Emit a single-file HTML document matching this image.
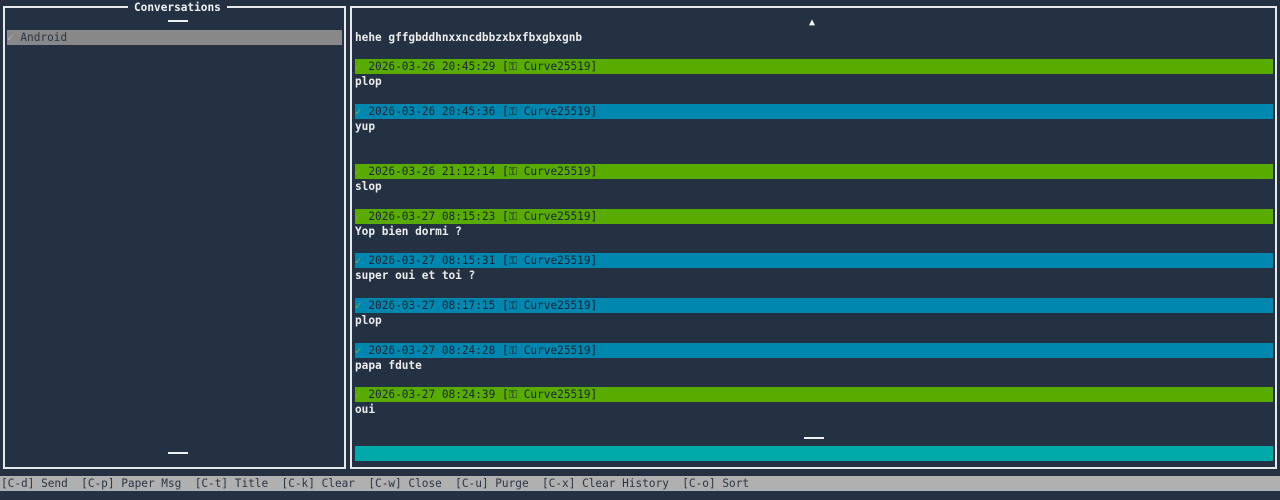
<!DOCTYPE html>
<html><head><meta charset="utf-8"><style>
html,body{margin:0;padding:0;width:1280px;height:500px;overflow:hidden;background:#243142;}
body{position:relative;font-family:"DejaVu Sans Mono","Liberation Mono",monospace;font-size:11.1px;color:#f0f0f0;}
.a{position:absolute;white-space:pre;line-height:15px;height:15px;}
.box{position:absolute;border:2px solid #e8e8e8;box-sizing:border-box;}
.bar{left:355px;width:918px;color:#1a2636;}
.g{background:#5aab00;}
.b{background:#0087af;}
.ck{color:#7fa060;}
.m{left:355px;font-weight:bold;color:#ececec;}
.ln{position:absolute;height:2px;background:#f0f0f0;width:20px;}
</style></head><body>
<div class="box" style="left:3px;top:6px;width:343px;height:463px"></div>
<div class="box" style="left:350px;top:6px;width:927px;height:463px"></div>
<div class="a" style="left:128px;top:0px;background:#243142;padding:0 6px;font-weight:bold">Conversations</div>
<div class="ln" style="left:168px;top:20px"></div>
<div class="a" style="left:7px;top:30px;width:335px;background:#888;color:#2a3545"><span style="color:#aaa">✓</span> Android</div>
<div class="ln" style="left:168px;top:452px"></div>

<div class="a" style="left:809px;top:15px;font-size:10px">▲</div>
<div class="a m" style="top:30px">hehe gffgbddhnxxncdbbzxbxfbxgbxgnb</div>

<div class="a bar g" style="top:59px"><span class="ck">✓</span> 2026-03-26 20:45:29 [⚿ Curve25519]</div>
<div class="a m" style="top:74px">plop</div>
<div class="a bar b" style="top:104px"><span class="ck">✓</span> 2026-03-26 20:45:36 [⚿ Curve25519]</div>
<div class="a m" style="top:119px">yup</div>
<div class="a bar g" style="top:164px"><span class="ck">✓</span> 2026-03-26 21:12:14 [⚿ Curve25519]</div>
<div class="a m" style="top:179px">slop</div>
<div class="a bar g" style="top:209px"><span class="ck">✓</span> 2026-03-27 08:15:23 [⚿ Curve25519]</div>
<div class="a m" style="top:224px">Yop bien dormi ?</div>
<div class="a bar b" style="top:253px"><span class="ck">✓</span> 2026-03-27 08:15:31 [⚿ Curve25519]</div>
<div class="a m" style="top:268px">super oui et toi ?</div>
<div class="a bar b" style="top:298px"><span class="ck">✓</span> 2026-03-27 08:17:15 [⚿ Curve25519]</div>
<div class="a m" style="top:313px">plop</div>
<div class="a bar b" style="top:343px"><span class="ck">✓</span> 2026-03-27 08:24:28 [⚿ Curve25519]</div>
<div class="a m" style="top:358px">papa fdute</div>
<div class="a bar g" style="top:387px"><span class="ck">✓</span> 2026-03-27 08:24:39 [⚿ Curve25519]</div>
<div class="a m" style="top:402px">oui</div>
<div class="ln" style="left:804px;top:437px"></div>
<div class="a" style="left:355px;top:446px;width:918px;background:#00aaaa"></div>

<div class="a" style="left:0;top:476px;width:1280px;background:#b0b0b0;color:#2a3545;padding-left:1px;box-sizing:border-box">[C-d] Send  [C-p] Paper Msg  [C-t] Title  [C-k] Clear  [C-w] Close  [C-u] Purge  [C-x] Clear History  [C-o] Sort</div>
</body></html>
